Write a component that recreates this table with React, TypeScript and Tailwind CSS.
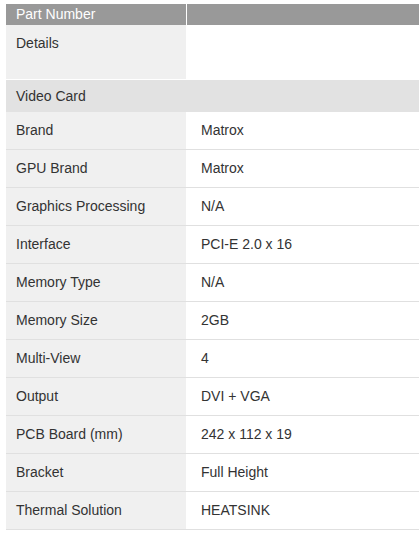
import React from "react";

const rows: [string, string][] = [
  ["Brand", "Matrox"],
  ["GPU Brand", "Matrox"],
  ["Graphics Processing", "N/A"],
  ["Interface", "PCI-E 2.0 x 16"],
  ["Memory Type", "N/A"],
  ["Memory Size", "2GB"],
  ["Multi-View", "4"],
  ["Output", "DVI + VGA"],
  ["PCB Board (mm)", "242 x 112 x 19"],
  ["Bracket", "Full Height"],
  ["Thermal Solution", "HEATSINK"],
];

export default function App() {
  return (
    <div
      className="w-[419px] h-[542px] bg-white pt-[4px] pl-[6px] text-[14px] text-[#333]"
      style={{ fontFamily: '"Liberation Sans", Arial, sans-serif' }}
    >
      <div className="flex h-[21px]">
        <div className="w-[180px] bg-[#999] text-white pl-[10px] leading-[21px]">Part Number</div>
        <div className="flex-1 ml-px bg-[#999]"></div>
      </div>
      <div className="flex h-[54px]">
        <div className="w-[180px] bg-[#f0f0f0] pl-[10px] pt-[8px] leading-[20px]">Details</div>
        <div className="flex-1 ml-px bg-white"></div>
      </div>
      <div className="h-px bg-white"></div>
      <div className="h-[32px] bg-[#e2e2e2] pl-[10px] leading-[33px]">Video Card</div>
      {rows.map(([k, v]) => (
        <div key={k} className="flex h-[38px] border-b border-[#e0e0e0]">
          <div className="w-[180px] bg-[#f0f0f0] pl-[10px] flex items-center">{k}</div>
          <div className="flex-1 ml-px bg-white pl-[14px] flex items-center">{v}</div>
        </div>
      ))}
    </div>
  );
}
